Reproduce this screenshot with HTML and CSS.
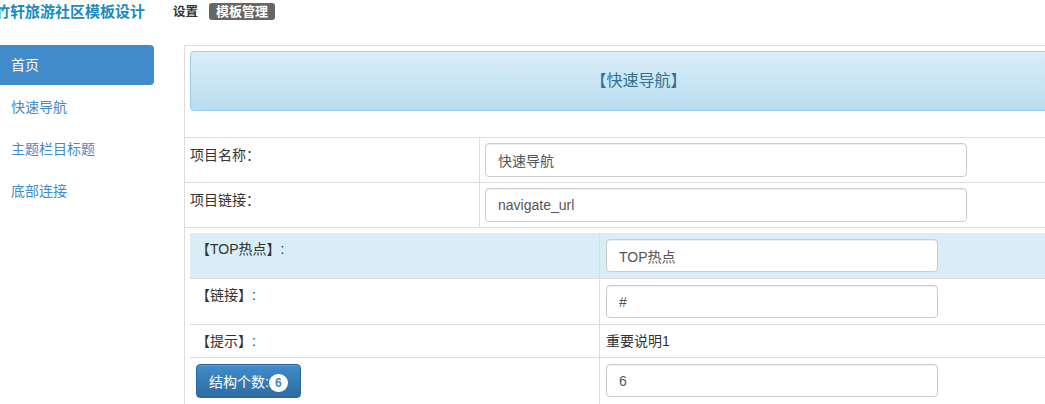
FILE: index.html
```html
<!DOCTYPE html>
<html lang="zh-CN">
<head>
  <meta charset="UTF-8">
  <meta name="viewport" content="width=device-width, initial-scale=1.0">
  <title>竹轩旅游社区模板设计</title>
  <link rel="stylesheet" href="styles.css">
</head>
<body>
  <div class="topbar">
    <span class="brand">竹轩旅游社区模板设计</span>
    <span class="top-link">设置</span>
    <span class="top-label">模板管理</span>
  </div>

  <div class="layout">
    <ul class="side-nav">
      <li><a class="active" href="#">首页</a></li>
      <li><a href="#">快速导航</a></li>
      <li><a href="#">主题栏目标题</a></li>
      <li><a href="#">底部连接</a></li>
    </ul>

    <div class="main">
      <table class="form-table">
        <tr>
          <td colspan="2">
            <div class="title-box">【快速导航】</div>
          </td>
        </tr>
        <tr>
          <td class="label-cell">项目名称：</td>
          <td class="value-cell"><input class="field" type="text" value="快速导航"></td>
        </tr>
        <tr>
          <td class="label-cell">项目链接：</td>
          <td class="value-cell"><input class="field" type="text" value="navigate_url"></td>
        </tr>
        <tr>
          <td colspan="2" class="nested-cell">
            <table class="sub-table">
              <tr class="info-row">
                <td class="sub-label">【TOP热点】:</td>
                <td class="sub-value"><input class="field small" type="text" value="TOP热点"></td>
              </tr>
              <tr>
                <td class="sub-label">【链接】:</td>
                <td class="sub-value"><input class="field small" type="text" value="#"></td>
              </tr>
              <tr>
                <td class="sub-label">【提示】:</td>
                <td class="sub-value">重要说明1</td>
              </tr>
              <tr>
                <td class="sub-label">
                  <button class="btn-count" type="button">结构个数:<span class="badge">6</span></button>
                </td>
                <td class="sub-value"><input class="field small" type="text" value="6"></td>
              </tr>
            </table>
          </td>
        </tr>
      </table>
    </div>
  </div>
</body>
</html>
```

FILE: styles.css
```css
body {
  margin: 0;
  font-family: 'Liberation Sans', 'Noto Sans CJK SC', sans-serif;
  font-size: 14px;
  line-height: 20px;
  color: #333;
  background: #fff;
  overflow: hidden;
}

.topbar {
  display: flex;
  align-items: center;
  height: 21px;
  padding-top: 1px;
  margin-bottom: 23px;
}

.brand {
  margin-left: -5px;
  font-size: 15px;
  font-weight: bold;
  color: #1b8bc2;
}

.top-link {
  margin-left: 28px;
  font-size: 12.5px;
  font-weight: bold;
  color: #333;
}

.top-label {
  margin-left: 11px;
  padding: 0 7px;
  height: 17px;
  line-height: 17px;
  font-size: 13px;
  font-weight: bold;
  color: #fff;
  background: #666;
  border-radius: 3px;
}

.layout {
  display: flex;
}

.side-nav {
  list-style: none;
  margin: 0 30px 0 0;
  padding: 0;
  width: 154px;
  flex-shrink: 0;
}

.side-nav a {
  display: block;
  padding: 10px 11px;
  margin-bottom: 2px;
  color: #428bca;
  text-decoration: none;
  border-radius: 0 4px 4px 0;
}

.side-nav a.active {
  background: #428bca;
  color: #fff;
}

.main {
  flex-shrink: 0;
}

.form-table {
  width: 908px;
  border-spacing: 0;
  border-top: 1px solid #ddd;
  border-left: 1px solid #ddd;
}

.form-table > tbody > tr > td {
  padding: 5px;
  vertical-align: top;
  border-bottom: 1px solid #ddd;
}

.form-table .label-cell {
  width: 284px;
  padding-top: 7px;
}

.form-table .value-cell {
  border-left: 1px solid #ddd;
}

.title-box {
  margin-bottom: 21px;
  padding: 18px 15px;
  line-height: 22px;
  font-size: 16px;
  text-align: center;
  color: #31708f;
  border: 1px solid #9acfea;
  border-radius: 4px;
  background: linear-gradient(#d9edf7, #b9def0);
  box-shadow: inset 0 1px 0 rgba(255, 255, 255, 0.25);
}

.field {
  box-sizing: border-box;
  width: 482px;
  height: 34px;
  padding: 6px 12px;
  font-family: inherit;
  font-size: 14px;
  color: #555;
  background: #fff;
  border: 1px solid #ccc;
  border-radius: 4px;
  box-shadow: inset 0 1px 1px rgba(0, 0, 0, 0.075);
}

.field.small {
  width: 332px;
  height: 33px;
}

.sub-table {
  width: 896px;
  border-spacing: 0;
}

.sub-table td {
  padding: 6px;
  vertical-align: top;
  border-bottom: 1px solid #ddd;
}

.sub-table .sub-label {
  width: 397px;
}

.sub-table .sub-value {
  border-left: 1px solid #ddd;
}

.sub-table .info-row td {
  background: #d9edf7;
}

.btn-count {
  height: 34px;
  padding: 6px 12px;
  font-family: inherit;
  font-size: 14px;
  color: #fff;
  border: 1px solid #2b669a;
  border-radius: 4px;
  background: linear-gradient(#428bca, #2d6ca2);
  box-shadow: inset 0 1px 0 rgba(255, 255, 255, 0.15);
}

.badge {
  display: inline-block;
  padding: 2px 6px;
  font-size: 12px;
  font-weight: bold;
  line-height: 14px;
  color: #428bca;
  background: #fff;
  border-radius: 10px;
}
```
